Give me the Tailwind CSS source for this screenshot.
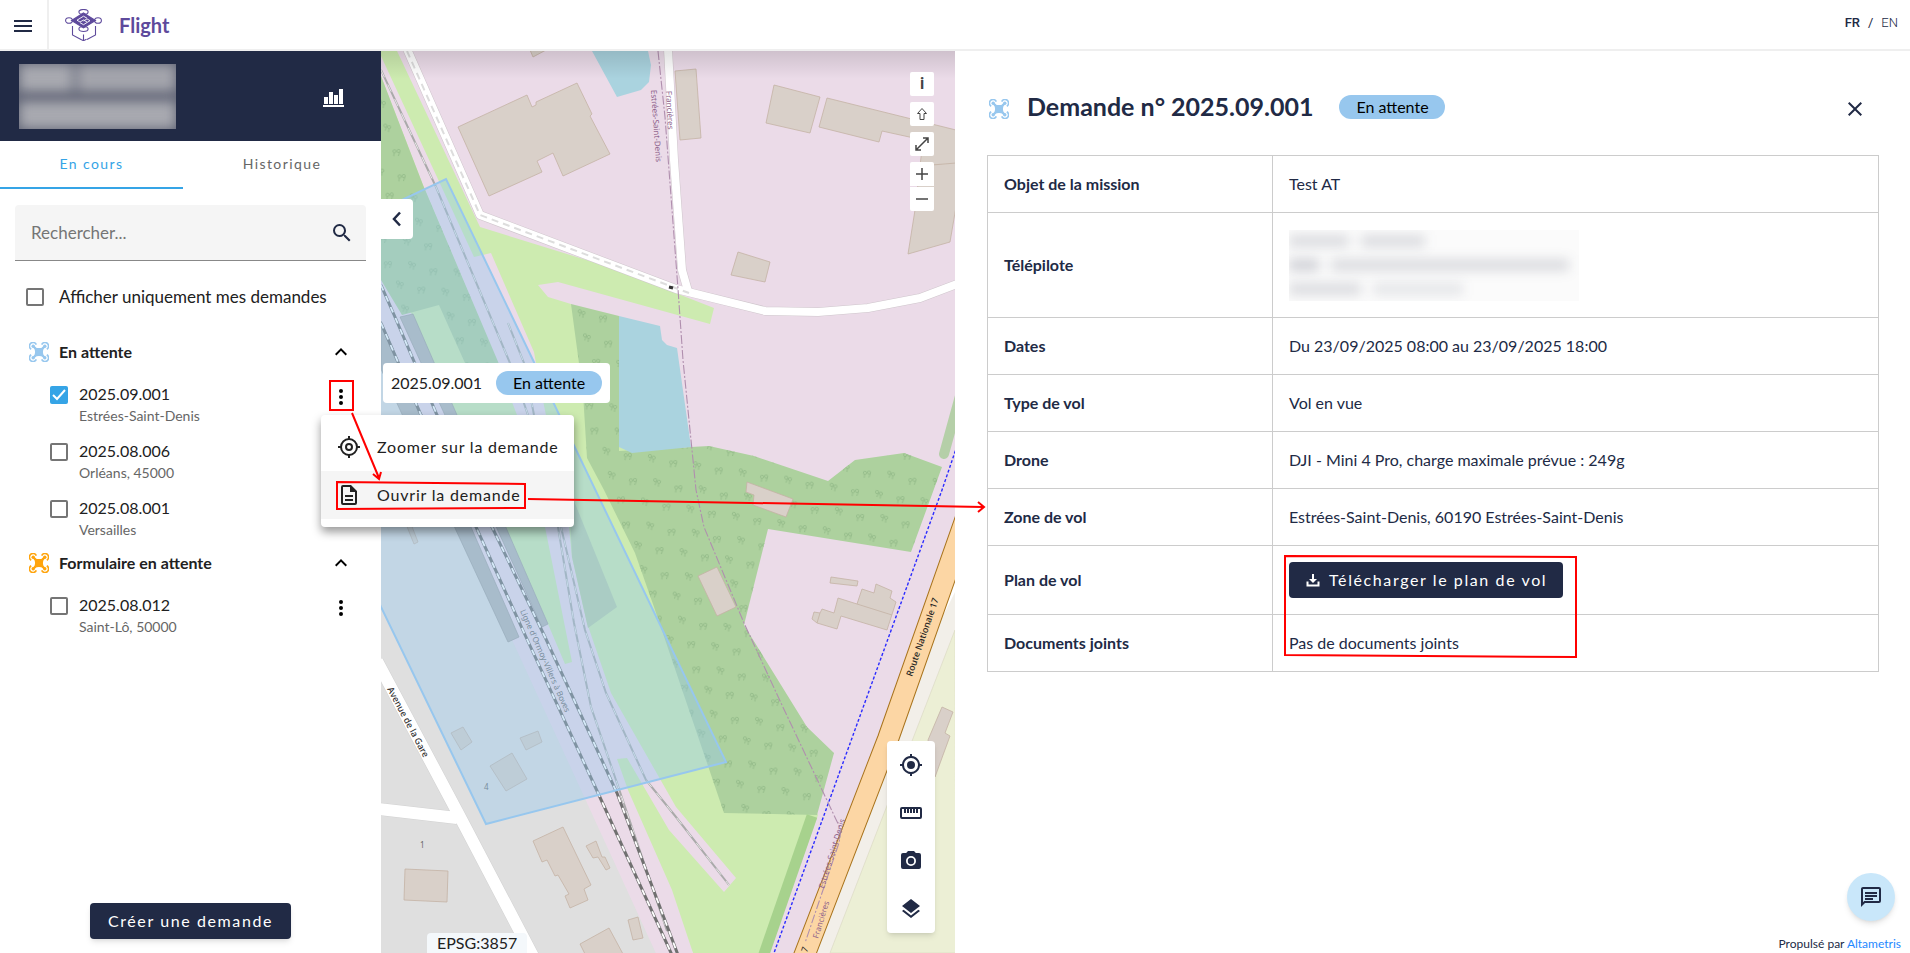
<!DOCTYPE html>
<html lang="fr">
<head>
  <meta charset="UTF-8">
  <meta name="viewport" content="width=device-width, initial-scale=1.0">
  <title>Flight - Demandes de vol</title>
  <script src="https://cdn.jsdelivr.net/npm/@tailwindcss/browser@4"></script>
</head>
<body class="relative flex flex-col h-screen overflow-hidden bg-white font-[Lato,sans-serif] text-base text-[#212121]">

  <!-- Icônes partagées -->
  <svg class="hidden" aria-hidden="true">
    <symbol id="drone" viewBox="0 0 20 20">
      <g fill="none" stroke="currentColor" stroke-width="1.6">
        <path d="M2.200 7.200A3.600 3.600 0 1 1 7.300 2.600M12.700 2.600a3.600 3.600 0 1 1 5.100 4.600M17.800 12.800a3.600 3.600 0 1 1-5.100 4.600M7.300 17.400a3.600 3.600 0 1 1-5.100-4.600"/>
        <path d="M4 4l4 4M16 4l-4 4M4 16l4-4M16 16l-4-4" stroke-width="2.400"/>
      </g>
      <path d="M5.400 5.400Q10 6.800 14.600 5.400Q13.200 10 14.600 14.600Q10 13.200 5.400 14.600Q6.800 10 5.400 5.400z" fill="currentColor"/>
      <g fill="currentColor"><circle cx="4.200" cy="4.200" r="1.700"/><circle cx="15.800" cy="4.200" r="1.700"/><circle cx="4.200" cy="15.800" r="1.700"/><circle cx="15.800" cy="15.800" r="1.700"/></g>
    </symbol>
    <symbol id="up" viewBox="0 0 24 24"><path d="M7.41 15.41L12 10.83l4.59 4.58L18 14l-6-6-6 6z"/></symbol>
    <symbol id="dots" viewBox="0 0 24 24"><path d="M12 16a2 2 0 1 1 0 4 2 2 0 0 1 0-4m0-6a2 2 0 1 1 0 4 2 2 0 0 1 0-4m0-6a2 2 0 1 1 0 4 2 2 0 0 1 0-4"/></symbol>
  </svg>

  <!-- Barre du haut -->
  <header class="flex items-center h-[51px] shrink-0 border-b-2 border-[#efefef]">
    <button aria-label="Menu" class="flex items-center justify-center w-[49px] h-full border-r-2 border-[#efefef]">
      <svg class="w-6 h-6 fill-[#212a45]" viewBox="0 0 24 24"><path d="M2 7h18v2H2V7m0 5h18v2H2v-2m0 5h18v2H2v-2z"/></svg>
    </button>
    <svg class="ml-4 w-[38px] h-8 text-[#5e4a9c]" viewBox="0 0 38 32" fill="none" stroke="currentColor" stroke-width="1.1">
      <g><ellipse cx="4" cy="11.500" rx="3.400" ry="2.800"/><ellipse cx="33" cy="11.500" rx="3.400" ry="2.800"/><ellipse cx="18.500" cy="3" rx="4.600" ry="2.500"/><ellipse cx="18.500" cy="20" rx="4.600" ry="2.500"/></g>
      <path d="M18.500 4L30.500 11.500l-12 7.300L6.500 11.500z" fill="currentColor"/>
      <path d="M22 9.200l-3.500-2-6.500 4 3 1.800 3.500-2 3.500 2M15 13.700l3.500 2 6.500-4-3-1.800-3.500 2" stroke="#fff" stroke-width=".9"/>
      <path d="M7.500 17v9l8.500 4.500M30.500 17v9l-8.500 4.500M15.500 30.200l3 1.500 3-1.500M18.500 25.500v6"/>
    </svg>
    <span class="ml-4 text-xl font-bold text-[#5e4a9c]">Flight</span>
    <div class="ml-auto mr-3 pb-1 flex gap-2 text-[13px] text-[#212a45] font-[Roboto,sans-serif]">
      <a href="#" class="font-medium">FR</a><span>/</span><a href="#" class="font-light">EN</a>
    </div>
  </header>

  <main class="flex flex-1 min-h-0">
    <!-- Panneau des demandes -->
    <aside class="flex flex-col w-[381px] shrink-0">
      <div class="flex items-center justify-between h-[90px] shrink-0 bg-[#212a45] pl-[19px] pr-9">
        <div class="w-[157px] h-[65px] overflow-hidden bg-[#5d6173] flex flex-col justify-between">
          <div class="flex gap-1 blur-[6px]"><span class="w-[54px] h-7 bg-[#a8a9b0]"></span><span class="flex-1 h-7 bg-[#a3a4ac]"></span></div>
          <div class="flex blur-[6px]"><span class="w-full h-7 bg-[#a8a9b0]"></span></div>
        </div>
        <button aria-label="Statistiques"><svg class="w-6 h-6 fill-white" viewBox="0 0 24 24"><path d="M2 21h21v2H2zM3 13h4v7H3zM8 8h4v12H8zM13 11h4v9h-4zM18 5h4v15h-4z"/></svg></button>
      </div>

      <div class="flex h-12 shrink-0 text-sm tracking-widest">
        <button class="w-[183px] border-b-2 border-[#35a4e6] text-[#35a4e6]">En cours</button>
        <button class="flex-1 border-b-2 border-transparent text-[#666]">Historique</button>
      </div>

      <div class="flex items-center mt-4 mx-[15px] h-14 shrink-0 rounded-t bg-[#f5f5f5] border-b border-[#888] px-3">
        <input type="text" aria-label="Rechercher" placeholder="Rechercher..." class="flex-1 min-w-0 pl-1 text-[17px] outline-none placeholder:text-[#757575]">
        <svg class="w-6 h-6 fill-[#212a45]" viewBox="0 0 24 24"><path d="M9.500 3A6.500 6.500 0 0 1 16 9.500c0 1.610-.59 3.090-1.560 4.230l.27.270h.79l5 5-1.500 1.500-5-5v-.79l-.27-.27A6.516 6.516 0 0 1 9.500 16 6.500 6.500 0 0 1 3 9.500 6.500 6.500 0 0 1 9.500 3m0 2C7 5 5 7 5 9.500S7 14 9.500 14 14 12 14 9.500 12 5 9.500 5z"/></svg>
      </div>

      <label class="flex items-center mt-6 h-6 pl-[26px] gap-[15px] text-[17px]">
        <input type="checkbox" class="appearance-none w-[18px] h-[18px] rounded-xs border-2 border-[#757575]">
        Afficher uniquement mes demandes
      </label>

      <section class="mt-[31px] pr-7">
        <div class="flex items-center h-6 pl-[29px]">
          <svg class="w-5 h-5 text-[#97c7ee]"><use href="#drone"/></svg>
          <h2 class="ml-[10px] flex-1 font-bold">En attente</h2>
          <button aria-label="Replier"><svg class="w-6 h-6"><use href="#up"/></svg></button>
        </div>
        <ul class="mt-[18px] h-[169px]">
          <li class="flex h-[57px] pl-[50px]">
            <span class="relative mt-1 w-[18px] h-[18px]">
              <input id="d1" type="checkbox" checked class="block appearance-none w-[18px] h-[18px] rounded-xs bg-[#35a4e6]">
              <svg class="absolute inset-0 pointer-events-none" viewBox="0 0 18 18" fill="none" stroke="#fff" stroke-width="2"><path d="M3 9l4 4 8-9"/></svg>
            </span>
            <label for="d1" class="ml-[11px] flex-1"><span class="block leading-6">2025.09.001</span><span class="block text-sm leading-5 text-[#666]">Estrées-Saint-Denis</span></label>
            <button aria-label="Actions" class="self-start mt-[3px]"><svg class="w-6 h-6"><use href="#dots"/></svg></button>
          </li>
          <li class="flex h-[57px] pl-[50px]">
            <input id="d2" type="checkbox" class="mt-1 appearance-none w-[18px] h-[18px] rounded-xs border-2 border-[#757575]">
            <label for="d2" class="ml-[11px] flex-1"><span class="block leading-6">2025.08.006</span><span class="block text-sm leading-5 text-[#666]">Orléans, 45000</span></label>
          </li>
          <li class="flex h-[57px] pl-[50px]">
            <input id="d3" type="checkbox" class="mt-1 appearance-none w-[18px] h-[18px] rounded-xs border-2 border-[#757575]">
            <label for="d3" class="ml-[11px] flex-1"><span class="block leading-6">2025.08.001</span><span class="block text-sm leading-5 text-[#666]">Versailles</span></label>
          </li>
        </ul>
        <div class="flex items-center h-6 pl-[29px]">
          <svg class="w-5 h-5 text-[#ffa40c]"><use href="#drone"/></svg>
          <h2 class="ml-[10px] flex-1 font-bold">Formulaire en attente</h2>
          <button aria-label="Replier"><svg class="w-6 h-6"><use href="#up"/></svg></button>
        </div>
        <ul class="mt-[18px]">
          <li class="flex h-[57px] pl-[50px]">
            <input id="d4" type="checkbox" class="mt-1 appearance-none w-[18px] h-[18px] rounded-xs border-2 border-[#757575]">
            <label for="d4" class="ml-[11px] flex-1"><span class="block leading-6">2025.08.012</span><span class="block text-sm leading-5 text-[#666]">Saint-Lô, 50000</span></label>
            <button aria-label="Actions" class="self-start mt-[3px]"><svg class="w-6 h-6"><use href="#dots"/></svg></button>
          </li>
        </ul>
      </section>

      <button class="mt-auto mb-[14px] mx-auto h-9 px-[18px] rounded bg-[#212a45] text-white tracking-widest shadow-md">Créer une demande</button>
    </aside>

    <!-- Carte -->
    <section class="relative flex-1 min-w-0 overflow-hidden">
      <svg class="block w-full h-full" viewBox="0 0 574 902" preserveAspectRatio="xMinYMin slice" font-family="Noto Sans, sans-serif">
        <defs>
          <pattern id="trees" width="46" height="44" patternUnits="userSpaceOnUse" patternTransform="rotate(9)">
            <g fill="none" stroke="#90b986" stroke-width=".8">
              <circle cx="7" cy="6" r="1.600"/><path d="M8.500 6.500L7.500 11"/><circle cx="11" cy="7" r="1.600"/><path d="M11 9v3"/>
              <circle cx="29" cy="9" r="1.600"/><path d="M29 11v3"/><circle cx="33" cy="8" r="1.600"/><path d="M34.500 8.500L33.500 13"/>
              <circle cx="16" cy="29" r="1.600"/><path d="M17.500 29.500L16.500 34"/><circle cx="20" cy="30" r="1.600"/><path d="M20 32v3"/>
              <circle cx="38" cy="33" r="1.600"/><path d="M38 35v3"/><circle cx="42" cy="32" r="1.600"/><path d="M43.500 32.500L42.500 37"/>
            </g>
          </pattern>
        </defs>
        <rect width="574" height="902" fill="#ebdbe8"/>
        <!-- herbe et quartier -->
        <path fill="#cdebb0" d="M0 0H16L99 176L228 216L333 257L329 273L177 231L157 234L167 246L190 253L437 764L388 902H312L0 300z"/>
        <path fill="#dfdfdf" d="M0 295L275 902H0z"/>
        <!-- emprise ferroviaire -->
        <path fill="#ebdbe8" d="M0 5L93 206L110 202L153 301L160 340L188 476L164 476L136 364L107 289L42 134L0 25z"/>
        <path fill="#ebdbe8" d="M0 225L30 262L167 573L184 613L191 611L164 476H188L191 506L206 572L230 642L295 756L355 827L343 841L288 779L246 707L236 708L247 739L291 839L312 902H275L132 591L0 300z"/>
        <path fill="#b5b5b5" stroke="#999" stroke-width=".7" d="M0 270L138 586L127 591L0 318zM19 266L32 263L167 573L161 576z"/>
        <!-- bois -->
        <path fill="#add19e" d="M0 25L42 134L118 313L105 330L84 312L58 254L21 264L0 229z"/>
        <path fill="url(#trees)" d="M0 25L42 134L118 313L105 330L84 312L58 254L21 264L0 229z"/>
        <path fill="#b7cfa8" d="M193 450L236 556L207 577L191 506L188 440z"/>
        <path fill="#add19e" d="M190 253L238 265V400L310 396L328 395L373 405L447 430L474 409L523 402L561 416L530 501L387 478L363 574L426 676L453 702L436 764L343 762L273 556L254 502L223 439L206 407L202 342z"/>
        <path fill="url(#trees)" d="M190 253L238 265V400L310 396L328 395L373 405L447 430L474 409L523 402L561 416L530 501L387 478L363 574L426 676L453 702L436 764L343 762L273 556L254 502L223 439L206 407L202 342z"/>
        <path fill="none" stroke="#a7d28d" stroke-width="11" d="M431 765L382 906"/>
        <path fill="none" stroke="#b5cfa8" stroke-width="10" stroke-linecap="round" d="M579 345L563 403"/>
        <!-- eau -->
        <path fill="#aad3df" d="M238 265L279 275L281 289L286 294L296 297L310 396L251 402L238 396zM211 0L236 46L260 39L268 31L270 14L267 0z"/>
        <!-- champs à l'est -->
        <path fill="#f2efe9" d="M574 510V579L449 902H430z"/>
        <path fill="#ecefd5" stroke="#dcdcc4" stroke-width=".7" d="M574 579L449 902H575z"/>
        <!-- bâtiments -->
        <g fill="#d9d0c9" stroke="#c4b3a5" stroke-width=".8">
          <path d="M77 76L146 44L151 56L155 54V51L196 32L211 63L209 65L229 103L182 125L172 102L156 110L161 121L108 145z"/>
          <path d="M294 20L315 18L320 87L299 89zM393 34L439 46L429 82L385 72z"/>
          <path d="M446 47L575 79V113L539 115L542 89L501 80L498 91L438 76z"/>
          <path d="M539 115L575 112V156L569 191L527 203L534 159z"/>
          <path d="M357 201L389 211L384 231L350 224zM149 -1L152 6L165 -1z"/>
          <path d="M366 431L412 448L405 466L372 454L373 444L365 441zM317 525L336 516L355 556L336 565z"/>
          <path d="M450 526L477 530L476 535L449 532z"/>
          <path d="M495 533L511 540L509 547L515 551L506 579L460 565L456 578L436 572L431 568L433 561L439 562L441 558L453 562L457 547L476 553L481 538L493 542z"/>
          <path d="M476 553L511 564M439 562L436 572" fill="none"/>
          <path d="M561 656L572 661L564 682L569 685L554 726L547 689z"/>
          <path d="M24 818L67 820L66 851L23 849z"/>
          <path d="M182 776L210 834L203 838L207 849L189 857L184 845L188 843L177 824L174 825L166 809L161 811L152 790z"/>
          <path d="M215 790L221 806H224L229 817L225 819L217 806L212 807L205 795zM247 869L257 866L262 887L252 889zM228 877L242 903H204L199 893z"/>
          <path d="M70 682L82 676L91 691L80 699zM109 715L131 702L146 728L125 740zM139 687L157 680L161 691L145 699zM25 473L30 473L37 491L33 493z"/>
        </g>
        <!-- routes -->
        <g fill="none" stroke-linejoin="round">
          <path stroke="#cfc6cc" stroke-width="9" d="M287 -2L293 109L301 219L307 240"/>
          <path stroke="#cfc6cc" stroke-width="9" d="M26 -2L99 164L295 238L384 260L437 261L487 257L539 247L576 233"/>
          <path stroke="#d2d2d2" stroke-width="13" d="M-4 610L79 766L154 909M-2 758L76 767"/>
          <path stroke="#fff" stroke-width="8" d="M287 -2L293 109L301 219L307 240"/>
          <path stroke="#fff" stroke-width="8" d="M26 -2L99 164L295 238L384 260L437 261L487 257L539 247L576 233"/>
          <path stroke="#fff" stroke-width="12" d="M-4 610L79 766L154 909M-2 758L76 767"/>
          <path stroke="#ddd" stroke-width="2" stroke-dasharray="7 5" d="M26 0L99 164L308 242"/>
          <path stroke="#333" stroke-width="3" d="M288 236l4 1"/>
          <path stroke="#fff" stroke-width="8" d="M576 528L560 560"/>
          <path stroke="#a8731c" stroke-width="22" d="M585 467L507 688L420 913"/>
          <path stroke="#fcd6a4" stroke-width="20" d="M585 467L507 688L420 913"/>
          <path stroke="#2b2bff" stroke-width="1.400" stroke-dasharray="3 2" d="M576 395L561 439L393 902"/>
          <path stroke="#b08fae" stroke-width="1.100" stroke-dasharray="9 2 2 2" d="M277 0L284 66L297 238L302 309L313 419L315 439L323 476L363 572L400 652L460 779L458 792L424 892"/>
        </g>
        <!-- voies ferrées -->
        <g fill="none">
          <path stroke="#aaa" stroke-width="2" d="M0 19L55 136L129 312L147 364L177 476L193 572L210 656L236 732L286 880M127 272L143 312L153 364L180 476L204 579L225 642L265 729L295 766L348 834"/>
          <path stroke="#e8e8e8" stroke-width="1" stroke-dasharray="8 8" d="M0 19L55 136L129 312L147 364L177 476L193 572L210 656L236 732L286 880M127 272L143 312L153 364L180 476L204 579L225 642L265 729L295 766L348 834"/>
          <path stroke="#707070" stroke-width="3" d="M0 272L40 364L95 476L145 586L217 742L291 904M0 234L14 266L56 364L111 476L164 586L236 742L297 904"/>
          <path stroke="#fff" stroke-width="1.800" stroke-dasharray="6 6" d="M0 272L40 364L95 476L145 586L217 742L291 904M0 234L14 266L56 364L111 476L164 586L236 742L297 904"/>
        </g>
        <!-- libellés -->
        <g font-size="8" fill="#8d618b">
          <text transform="translate(285 40) rotate(87)">Francières</text>
          <text transform="translate(270 39) rotate(86)">Estrées-Saint-Denis</text>
          <text transform="translate(443 838) rotate(-73)">Estrées-Saint-Denis</text>
          <text transform="translate(437 888) rotate(-73)">Francières</text>
          <text transform="translate(139 560) rotate(66)" fill="#666">Ligne d'Ormoy-Villers à Boves</text>
          <text transform="translate(6 638) rotate(62)" fill="#333" font-size="9" font-weight="500">Avenue de la Gare</text>
          <text transform="translate(531 626) rotate(-71)" fill="#222" font-size="9" font-weight="500">Route Nationale 17</text>
          <text x="103" y="739" fill="#666">4</text>
          <text x="39" y="797" fill="#666">1</text>
          <text transform="translate(426 902) rotate(-71)" fill="#222" font-size="9">7</text>
        </g>
        <!-- zone de vol -->
        <path fill="#97c7ee" fill-opacity=".4" stroke="#97c7ee" stroke-width="2" d="M-30 173L65 128L345 711L105 773L0 556L-30 490z"/>
      </svg>
      <div class="absolute inset-x-0 top-0 h-7 bg-linear-to-b from-black/12 to-transparent"></div>

      <button aria-label="Réduire le panneau" class="absolute left-0 top-[148px] flex items-center justify-center w-8 h-10 rounded-r bg-white">
        <svg class="w-5 h-5" viewBox="0 0 20 20" fill="none" stroke="#212a45" stroke-width="2.500"><path d="M13 3.500L7 10l6 6.500"/></svg>
      </button>

      <div class="absolute left-[2px] top-[312px] flex items-center gap-[14px] h-10 px-2 rounded bg-white">
        <span>2025.09.001</span>
        <span class="w-[106px] h-6 rounded-full bg-[#97c7ee] text-center leading-6 text-black">En attente</span>
      </div>

      <div class="absolute right-[21px] top-[21px] flex flex-col gap-[6px] w-6 text-[#444]">
        <button aria-label="Informations" class="h-6 rounded-xs bg-white font-bold leading-6 font-[Roboto,sans-serif]">i</button>
        <button aria-label="Nord" class="h-6 rounded-xs bg-white flex items-center justify-center"><svg class="w-4 h-4" viewBox="0 0 16 16" fill="none" stroke="currentColor"><path d="M8 2.500L3.500 7.500H6V13.500H10V7.500H12.500z"/></svg></button>
        <button aria-label="Plein écran" class="h-6 rounded-xs bg-white flex items-center justify-center"><svg class="w-4 h-4" viewBox="0 0 16 16" fill="none" stroke="currentColor" stroke-width="1.500"><path d="M2 14L14 2M9 2h5v5M2 9v5h5"/></svg></button>
        <div class="flex flex-col gap-px">
          <button aria-label="Zoom avant" class="h-6 rounded-t-xs bg-white flex items-center justify-center"><svg class="w-4 h-4" viewBox="0 0 16 16" stroke="currentColor" stroke-width="1.500"><path d="M2 8h12M8 2v12"/></svg></button>
          <button aria-label="Zoom arrière" class="h-6 rounded-b-xs bg-white flex items-center justify-center"><svg class="w-4 h-4" viewBox="0 0 16 16" stroke="currentColor" stroke-width="1.500"><path d="M2 8h12"/></svg></button>
        </div>
      </div>

      <div class="absolute right-5 bottom-5 flex flex-col w-12 rounded bg-white shadow-md fill-[#212a45]">
        <button aria-label="Ma position" class="flex items-center justify-center h-12"><svg class="w-6 h-6" viewBox="0 0 24 24"><path d="M12 8a4 4 0 1 1 0 8 4 4 0 0 1 0-8m-8.950 5H1v-2h2.050C3.500 6.830 6.830 3.500 11 3.050V1h2v2.050c4.170.450 7.500 3.780 7.950 7.950H23v2h-2.050c-.45 4.170-3.780 7.500-7.950 7.950V23h-2v-2.050C6.830 20.500 3.500 17.170 3.050 13M12 5a7 7 0 1 0 0 14 7 7 0 0 0 0-14z"/></svg></button>
        <button aria-label="Mesurer" class="flex items-center justify-center h-12"><svg class="w-6 h-6" viewBox="0 0 24 24"><path d="M21 6H3a2 2 0 0 0-2 2v8a2 2 0 0 0 2 2h18a2 2 0 0 0 2-2V8a2 2 0 0 0-2-2m0 10H3V8h2v4h2V8h1v4h2V8h1v4h2V8h1v4h2V8h1v4h2V8h2z"/></svg></button>
        <button aria-label="Capture" class="flex items-center justify-center h-12"><svg class="w-6 h-6" viewBox="0 0 24 24"><path fill-rule="evenodd" d="M9 2L7.170 4H4a2 2 0 0 0-2 2v12a2 2 0 0 0 2 2h16a2 2 0 0 0 2-2V6a2 2 0 0 0-2-2h-3.170L15 2zm3 5a5 5 0 1 1 0 10 5 5 0 0 1 0-10m0 1.800a3.200 3.200 0 1 0 0 6.400 3.200 3.200 0 0 0 0-6.400z"/></svg></button>
        <button aria-label="Couches" class="flex items-center justify-center h-12"><svg class="w-6 h-6" viewBox="0 0 24 24"><path d="M12 16l7.360-5.730L21 9l-9-7-9 7 1.630 1.270M12 18.540l-7.380-5.730L3 14.070l9 7 9-7-1.630-1.270z"/></svg></button>
      </div>

      <div class="absolute left-[46px] bottom-0 h-5 px-[10px] rounded-t bg-[#f4f8fb] leading-5">EPSG:3857</div>
    </section>

    <!-- Détail de la demande -->
    <section class="w-1/2 shrink-0 pl-8 pr-[31px] pt-10 text-[#212a45]">
      <div class="flex items-center h-8">
        <svg class="ml-[2px] mt-1 w-5 h-5 text-[#97c7ee]"><use href="#drone"/></svg>
        <h1 class="ml-[18px] text-[25px] font-bold">Demande n° 2025.09.001</h1>
        <span class="ml-[26px] w-[106px] h-6 rounded-full bg-[#97c7ee] text-center leading-6 text-black">En attente</span>
        <button aria-label="Fermer" class="ml-auto mr-3 mt-1"><svg class="w-6 h-6 fill-[#212a45]" viewBox="0 0 24 24"><path d="M19 6.410L17.590 5 12 10.590 6.410 5 5 6.410 10.590 12 5 17.590 6.410 19 12 13.410 17.590 19 19 17.590 13.410 12z"/></svg></button>
      </div>

      <table class="mt-8 w-full table-fixed border-collapse text-left [&_th]:w-[285px] [&_th]:px-4 [&_th]:border [&_th]:border-[#ccc] [&_td]:px-4 [&_td]:border [&_td]:border-[#ccc]">
        <tr class="h-[57px]"><th>Objet de la mission</th><td>Test AT</td></tr>
        <tr class="h-[105px]">
          <th>Télépilote</th>
          <td>
            <div class="flex flex-col justify-around w-[290px] h-[71px] overflow-hidden bg-[#212a45]/2">
              <div class="flex gap-3 h-3 blur-[6px]"><span class="w-[60px] bg-[#212a45]/15"></span><span class="w-[64px] bg-[#212a45]/15"></span></div>
              <div class="flex gap-3 h-3 blur-[6px]"><span class="w-[30px] bg-[#212a45]/20"></span><span class="w-[238px] bg-[#212a45]/15"></span></div>
              <div class="flex gap-3 h-3 blur-[6px]"><span class="w-[72px] bg-[#212a45]/15"></span><span class="w-[90px] bg-[#212a45]/10"></span></div>
            </div>
          </td>
        </tr>
        <tr class="h-[57px]"><th>Dates</th><td>Du 23/09/2025 08:00 au 23/09/2025 18:00</td></tr>
        <tr class="h-[57px]"><th>Type de vol</th><td>Vol en vue</td></tr>
        <tr class="h-[57px]"><th>Drone</th><td>DJI - Mini 4 Pro, charge maximale prévue : 249g</td></tr>
        <tr class="h-[57px]"><th>Zone de vol</th><td>Estrées-Saint-Denis, 60190 Estrées-Saint-Denis</td></tr>
        <tr class="h-[69px]">
          <th>Plan de vol</th>
          <td>
            <button class="flex items-center gap-2 h-9 px-4 rounded bg-[#212a45] text-white tracking-widest">
              <svg class="w-4 h-4 fill-white" viewBox="0 0 16 16"><path d="M7 2h2v5h3l-4 4-4-4h3zM1.500 9.500h2v3h9v-3h2v5h-13z"/></svg>
              Télécharger le plan de vol
            </button>
          </td>
        </tr>
        <tr class="h-[57px]"><th>Documents joints</th><td>Pas de documents joints</td></tr>
      </table>
    </section>
  </main>

  <!-- Menu contextuel -->
  <div role="menu" class="absolute left-[321px] top-[415px] w-[253px] py-2 rounded bg-white shadow-[0_5px_10px_rgba(0,0,0,0.4)] tracking-wider">
    <button role="menuitem" class="flex items-center w-full h-12 pl-4 gap-4">
      <svg class="w-6 h-6" viewBox="0 0 24 24" fill="none" stroke="currentColor" stroke-width="2"><circle cx="12" cy="12" r="8"/><circle cx="12" cy="12" r="3"/><path d="M12 1v4M12 19v4M1 12h4M19 12h4"/></svg>
      Zoomer sur la demande
    </button>
    <button role="menuitem" class="flex items-center w-full h-12 pl-4 gap-4 bg-[#f5f5f5]">
      <svg class="w-6 h-6" viewBox="0 0 24 24" fill="currentColor"><path d="M6 2a2 2 0 0 0-2 2v16a2 2 0 0 0 2 2h12a2 2 0 0 0 2-2V8l-6-6H6m0 2h7v5h5v11H6V4m2 8v2h8v-2H8m0 4v2h8v-2H8z"/></svg>
      Ouvrir la demande
    </button>
  </div>

  <!-- Messagerie et pied de page -->
  <button aria-label="Messages" class="absolute right-[15px] bottom-8 flex items-center justify-center w-12 h-12 rounded-full bg-[#c9e7fa] shadow-md">
    <svg class="w-6 h-6 fill-[#212a45]" viewBox="0 0 24 24"><path d="M4 2h16a2 2 0 0 1 2 2v12a2 2 0 0 1-2 2H6l-4 4V4c0-1.110.9-2 2-2m0 2v13.170L5.170 16H20V4H4m2 3h12v2H6V7m0 3h12v2H6v-2m0 3h8v2H6v-2z"/></svg>
  </button>
  <footer class="absolute right-[9px] bottom-0 text-xs leading-[18px] text-[#212a45]">Propulsé par <a href="#" class="text-[#1e88ff]">Altametris</a></footer>

  <!-- Repères du guide utilisateur -->
  <svg class="absolute inset-0 w-full h-full pointer-events-none" fill="none" stroke="#f00" stroke-width="2">
    <path d="M330 381h23v29h-23zM337 482L525 484V508L337 509zM1285 556L1576 557V657L1285 655z"/>
    <path d="M352 413L379 478M373 474L379 479L381 472M528 499L983 507M978 502L984 507L978 512"/>
  </svg>
</body>
</html>
